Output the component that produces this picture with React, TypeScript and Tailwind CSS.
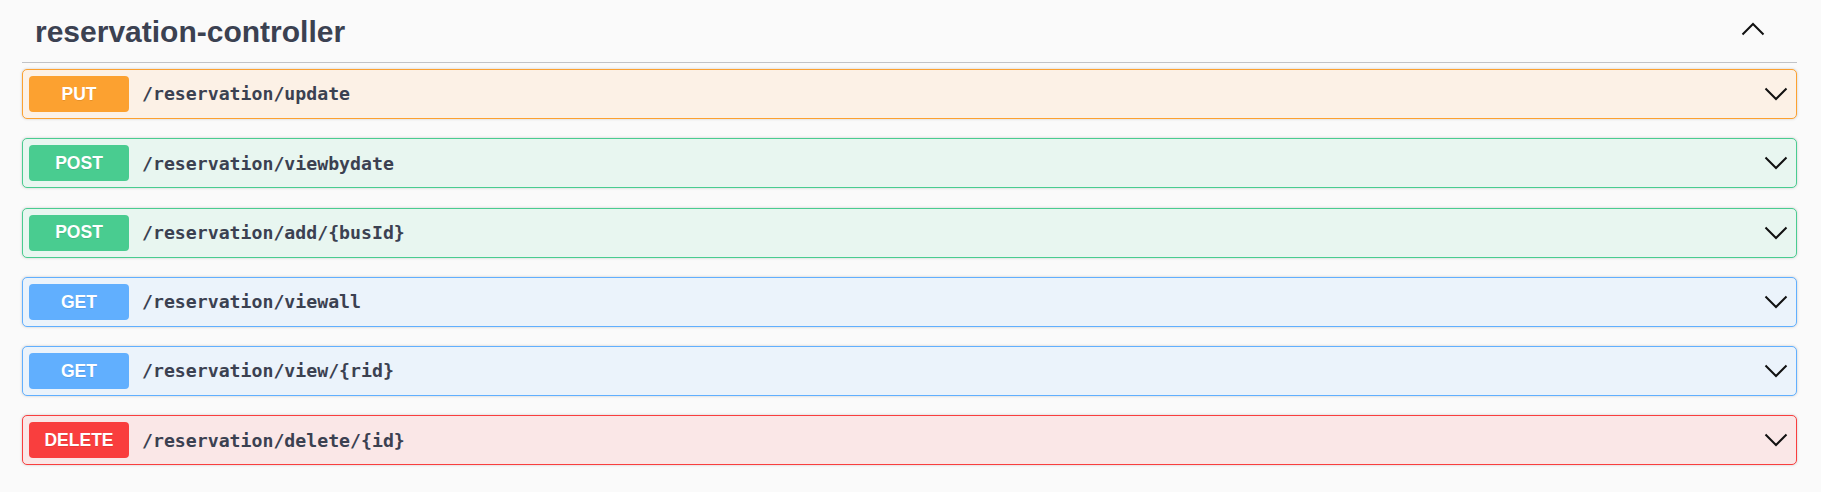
type Op = {
  method: string;
  path: string;
  badge: string;
  row: string;
};

const ops: Op[] = [
  { method: "PUT", path: "/reservation/update", badge: "bg-[#fca130]", row: "bg-[#fcf1e6] border-[#fca130]" },
  { method: "POST", path: "/reservation/viewbydate", badge: "bg-[#49cc90]", row: "bg-[#e8f6f0] border-[#49cc90]" },
  { method: "POST", path: "/reservation/add/{busId}", badge: "bg-[#49cc90]", row: "bg-[#e8f6f0] border-[#49cc90]" },
  { method: "GET", path: "/reservation/viewall", badge: "bg-[#61affe]", row: "bg-[#ebf3fb] border-[#61affe]" },
  { method: "GET", path: "/reservation/view/{rid}", badge: "bg-[#61affe]", row: "bg-[#ebf3fb] border-[#61affe]" },
  { method: "DELETE", path: "/reservation/delete/{id}", badge: "bg-[#f93e3e]", row: "bg-[#fae7e7] border-[#f93e3e]" },
];

function Chevron({ up }: { up?: boolean }) {
  return (
    <svg width="24" height="14" viewBox="0 0 24 14" fill="none" className="block">
      <polyline
        points={up ? "1.5,12.5 12,2 22.5,12.5" : "1.5,1.5 12,12 22.5,1.5"}
        stroke="#111"
        strokeWidth="2"
      />
    </svg>
  );
}

export default function App() {
  return (
    <div className="min-h-[492px] w-full bg-[#fafafa] pl-[22px] pr-[24px] font-['Liberation_Sans',Arial,sans-serif]">
      <div className="flex h-[63px] items-center justify-between border-b border-[#c1c3c7] pl-[13px] pr-[32px] pt-[2px]">
        <h3 className="text-[30px] font-bold leading-none text-[#3b4151]">reservation-controller</h3>
        <div className="-mt-[6px]">
          <Chevron up />
        </div>
      </div>
      <div className="pt-[6px]">
        {ops.map((op) => (
          <div
            key={op.path}
            className={`mb-[19.25px] flex h-[50px] items-center rounded-[5px] border p-[6px] shadow-[0_0_3px_rgba(0,0,0,0.19)] ${op.row}`}
          >
            <div
              className={`flex h-[36px] w-[100px] shrink-0 items-center justify-center rounded-[4px] text-[17.5px] font-bold text-white [text-shadow:0_1px_0_rgba(0,0,0,0.1)] ${op.badge}`}
            >
              {op.method}
            </div>
            <div className="flex-1 pl-[13px] font-['DejaVu_Sans_Mono',monospace] text-[18.2px] font-bold text-[#3b4151]">
              {op.path}
            </div>
            <div className="pr-[2px]">
              <Chevron />
            </div>
          </div>
        ))}
      </div>
    </div>
  );
}
